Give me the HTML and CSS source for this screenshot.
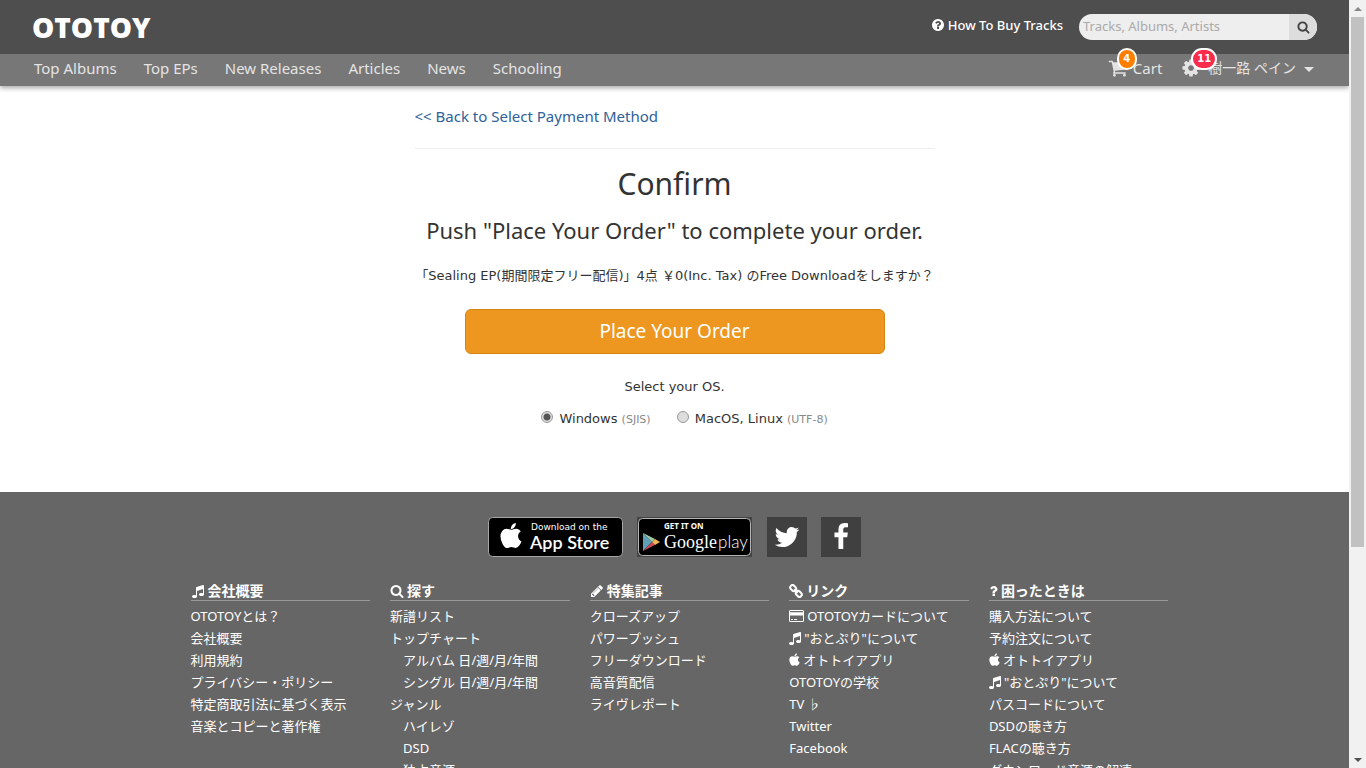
FILE: index.html
```html
<!DOCTYPE html>
<html lang="ja">
<head>
<meta charset="utf-8">
<title>Confirm - OTOTOY</title>
<link rel="stylesheet" href="styles.css">
</head>
<body>
<svg class="sprite" aria-hidden="true">
  <symbol id="i-search" viewBox="0 0 1792 1792"><path d="M1216 832q0-185-131.500-316.500t-316.500-131.500-316.500 131.500-131.500 316.500 131.500 316.500 316.500 131.500 316.500-131.500 131.500-316.500zm512 832q0 52-38 90t-90 38q-54 0-90-38l-343-342q-179 124-399 124-143 0-273.500-55.500t-225-150-150-225-55.500-273.500 55.500-273.500 150-225 225-150 273.500-55.500 273.500 55.500 225 150 150 225 55.500 273.500q0 220-124 399l343 343q37 37 37 90z"/></symbol>
  <symbol id="i-music" viewBox="128 0 1536 1792"><path d="M1664 224v1120q0 50-34 89t-86 60.500-103.500 32-96.500 10.500-96.500-10.500-103.500-32-86-60.500-34-89 34-89 86-60.500 103.500-32 96.500-10.500q105 0 192 39v-537l-768 237v709q0 50-34 89t-86 60.500-103.500 32-96.500 10.500-96.500-10.500-103.500-32-86-60.500-34-89 34-89 86-60.500 103.500-32 96.500-10.500q105 0 192 39v-967q0-31 19-56.500t49-35.500l832-256q12-4 28-4 40 0 68 28t28 68z"/></symbol>
  <symbol id="i-pencil" viewBox="128 0 1536 1792"><path d="M491 1536l91-91-235-235-91 91v107h128v128h107zm523-928q0-22-22-22-10 0-17 7l-542 542q-7 7-7 17 0 22 22 22 10 0 17-7l542-542q7-7 7-17zm-54-192l416 416-832 832h-416v-416zm683 96q0 53-37 90l-166 166-416-416 166-165q36-38 90-38 53 0 91 38l235 234q37 39 37 91z"/></symbol>
  <symbol id="i-cart" viewBox="0 0 1792 1792"><path d="M704 1536q0 52-38 90t-90 38-90-38-38-90 38-90 90-38 90 38 38 90zm896 0q0 52-38 90t-90 38-90-38-38-90 38-90 90-38 90 38 38 90zm128-1088v512q0 24-16.500 42.500t-40.500 21.500l-1044 122q13 60 13 70 0 16-24 64h920q26 0 45 19t19 45-19 45-45 19h-1024q-26 0-45-19t-19-45q0-11 8-31.500t16-36 21.500-40 15.500-29.500l-177-823h-204q-26 0-45-19t-19-45 19-45 45-19h256q16 0 28.500 6.500t19.500 15.500 13 24.500 8 26 5.500 29.500 4.500 26h1201q26 0 45 19t19 45z"/></symbol>
  <symbol id="i-cog" viewBox="0 0 1792 1792"><path d="M1152 896q0-106-75-181t-181-75-181 75-75 181 75 181 181 75 181-75 75-181zm512-109v222q0 12-8 23t-20 13l-185 28q-19 54-39 91 35 50 107 138 10 12 10 25t-9 23q-27 37-99 108t-94 71q-12 0-26-9l-138-108q-44 23-91 38-16 136-29 186-7 28-36 28h-222q-14 0-24.500-8.500t-11.500-21.500l-28-184q-49-16-90-37l-141 107q-10 9-25 9-14 0-25-11-126-114-165-168-7-10-7-23 0-12 8-23 15-21 51-66.500t54-70.500q-27-50-41-99l-183-27q-13-2-21-12.500t-8-23.500v-222q0-12 8-23t19-13l186-28q14-46 39-92-40-57-107-138-10-12-10-24 0-10 9-23 26-36 98.500-107.500t94.500-71.500q13 0 26 10l138 107q44-23 91-38 16-136 29-186 7-28 36-28h222q14 0 24.500 8.500t11.500 21.500l28 184q49 16 90 37l142-107q9-9 24-9 13 0 25 10 129 119 165 170 7 8 7 22 0 12-8 23-15 21-51 66.500t-54 70.500q26 50 41 98l183 28q13 2 21 12.500t8 23.500z"/></symbol>
  <symbol id="i-help" viewBox="0 0 1792 1792"><path d="M1024 1376v-192q0-14-9-23t-23-9h-192q-14 0-23 9t-9 23v192q0 14 9 23t23 9h192q14 0 23-9t9-23zm256-672q0-88-55.500-163t-138.500-116-170-41q-243 0-371 213-15 24 8 42l132 100q7 6 19 6 16 0 25-12 53-68 86-92 34-24 86-24 48 0 85.500 26t37.500 59q0 38-20 61t-68 45q-63 28-115.500 86.500t-52.500 125.500v36q0 14 9 23t23 9h192q14 0 23-9t9-23q0-19 21.500-49.500t54.500-49.500q32-18 49-28.500t46-35 44.500-48 28-60.500 12.500-81zm384 192q0 209-103 385.500t-279.500 279.500-385.500 103-385.500-103-279.500-279.500-103-385.500 103-385.500 279.500-279.500 385.500-103 385.500 103 279.500 279.500 103 385.500z"/></symbol>
  <symbol id="i-question" viewBox="384 0 1024 1792"><path d="M1088 1256v240q0 16-12 28t-28 12h-240q-16 0-28-12t-12-28v-240q0-16 12-28t28-12h240q16 0 28 12t12 28zm316-600q0 54-15.500 101t-35 76.500-55 59.500-57.500 43.500-61 35.500q-41 23-68.500 65t-27.500 67q0 17-12 32.500t-28 15.500h-240q-15 0-25.500-18.500t-10.500-37.500v-45q0-83 65-156.500t143-108.500q59-27 84-56t25-76q0-42-46.500-74t-107.500-32q-65 0-108 29-35 25-107 115-13 16-31 16-12 0-25-8l-164-125q-13-10-15.500-25t5.500-28q160-266 464-266 80 0 161 31t146 83 106 127.500 41 158.500z"/></symbol>
  <symbol id="i-link" viewBox="0 0 14 14"><g fill="none" stroke="currentColor" stroke-width="2"><rect x="1" y="1.800" width="6.400" height="4.600" rx="2.200" transform="rotate(45 4.200 4.100)"/><rect x="6.600" y="7.600" width="6.400" height="4.600" rx="2.200" transform="rotate(45 9.800 9.900)"/><path d="M5.200 5.200l3.600 3.600"/></g></symbol>
  <symbol id="i-card" viewBox="0 0 15 14"><path fill-rule="evenodd" d="M1.500 1h12A1.500 1.500 0 0 1 15 2.500v9a1.500 1.500 0 0 1-1.500 1.500h-12A1.500 1.500 0 0 1 0 11.500v-9A1.500 1.500 0 0 1 1.500 1zM1 3.200h13v-.7a.5.500 0 0 0-.5-.5h-12a.5.500 0 0 0-.5.500zM1 6.500v5a.5.500 0 0 0 .5.500h12a.5.500 0 0 0 .5-.5v-5zM2 10h2v1H2zm3 0h3v1H5z"/></symbol>
  <symbol id="i-apple" viewBox="150 0 1480 1792"><path d="M1585 1215q-39 125-123 250-129 196-257 196-49 0-140-32-86-32-151-32-61 0-142 33-81 34-132 34-152 0-301-259-147-261-147-503 0-228 113-374 113-144 284-144 72 0 177 30 104 30 138 30 45 0 143-34 102-34 173-34 119 0 213 65 52 36 104 100-79 67-114 118-65 94-65 207 0 124 69 223t158 126zm-376-1173q0 61-29 136-30 75-93 138-54 54-108 72-37 11-104 17 3-149 78-257 74-107 250-148 1 3 2.500 11t2.500 11q0 4 .5 10t.5 10z"/></symbol>
  <symbol id="i-twitter" viewBox="0 0 1792 1792"><path d="M1684 408q-67 98-162 167 1 14 1 42 0 130-38 259.500t-115.500 248.500-184.500 210.500-258 146-323 54.500q-271 0-496-145 35 4 78 4 225 0 401-138-105-2-188-64.500t-114-159.500q33 5 61 5 43 0 85-11-112-23-185.500-111.500t-73.500-205.500v-4q68 38 146 41-66-44-105-115t-39-154q0-88 44-163 121 149 294.500 238.500t371.500 99.500q-8-38-8-74 0-134 94.500-228.500t228.500-94.500q140 0 236 102 109-21 205-78-37 115-142 178 93-10 186-50z"/></symbol>
  <symbol id="i-facebook" viewBox="0 0 1792 1792"><path d="M1343 12v264h-157q-86 0-116 36t-30 108v189h293l-39 296h-254v759h-306v-759h-255v-296h255v-218q0-186 104-288.500t277-102.500q147 0 228 12z"/></symbol>
</svg>

<div class="window">
  <div class="page">
    <header class="header">
      <div class="topbar">
        <a class="logo" href="#">OTOTOY</a>
        <div class="tools">
          <a class="howto" href="#"><svg class="icon"><use href="#i-help"/></svg>How To Buy Tracks</a>
          <form class="search">
            <input type="text" placeholder="Tracks, Albums, Artists" aria-label="Search">
            <button type="button" aria-label="Search"><svg class="icon"><use href="#i-search"/></svg></button>
          </form>
        </div>
      </div>
      <nav class="navbar">
        <div class="menu">
          <a href="#">Top Albums</a><a href="#">Top EPs</a><a href="#">New Releases</a><a href="#">Articles</a><a href="#">News</a><a href="#">Schooling</a>
        </div>
        <div class="account">
          <a class="account-link" href="#"><svg class="big-icon"><use href="#i-cart"/></svg><span class="badge">4</span><span class="label">Cart</span></a>
          <a class="account-link" href="#"><svg class="big-icon"><use href="#i-cog"/></svg><span class="badge alert">11</span><span class="label name">樹一路 ペイン</span><span class="caret"></span></a>
        </div>
      </nav>
    </header>

    <main class="main">
      <a class="back" href="#">&lt;&lt; Back to Select Payment Method</a>
      <hr>
      <h1>Confirm</h1>
      <h2>Push "Place Your Order" to complete your order.</h2>
      <p class="order">「Sealing EP(期間限定フリー配信)」4点 ￥0(Inc. Tax) のFree Downloadをしますか？</p>
      <button class="place" type="button">Place Your Order</button>
      <p class="select-os">Select your OS.</p>
      <div class="os">
        <label><input type="radio" name="os" checked> Windows <small>(SJIS)</small></label>
        <label><input type="radio" name="os"> MacOS, Linux <small>(UTF-8)</small></label>
      </div>
    </main>

    <footer class="footer">
      <div class="apps">
        <a href="#" class="store">
          <svg width="135" height="40" viewBox="0 0 135 40" role="img">
            <rect x=".5" y=".5" width="134" height="39" rx="4" fill="#000" stroke="#a6a6a6"/>
            <svg x="11" y="6" width="24" height="27" fill="#fff"><use href="#i-apple"/></svg>
            <text x="43" y="13" class="t-small">Download on the</text>
            <text x="42" y="32" class="t-apple">App Store</text>
          </svg>
        </a>
        <a href="#" class="store play">
          <svg width="115" height="40" viewBox="0 0 115 40" role="img">
            <rect width="115" height="40" fill="#444"/>
            <rect x="1.500" y="1.500" width="112" height="37" rx="4" fill="#000" stroke="#b5b5b5"/>
            <path d="M6 16v18l9-9z" fill="#5f9fb8"/><path d="M6 16l12 6-3 3z" fill="#9bc9a4"/><path d="M6 34l12-6-3-3z" fill="#c94955"/><path d="M18 22l5 3-5 3-3-3z" fill="#f0b45c"/>
            <text x="27" y="12" class="t-get">GET IT ON</text>
            <text x="27" y="31" class="t-google">Google</text>
            <text x="81" y="31" class="t-play">play</text>
          </svg>
        </a>
        <a href="#" class="social" aria-label="Twitter"><svg><use href="#i-twitter"/></svg></a>
        <a href="#" class="social" aria-label="Facebook"><svg><use href="#i-facebook"/></svg></a>
      </div>
      <div class="columns">
        <section>
          <h3><svg class="icon"><use href="#i-music"/></svg>会社概要</h3>
          <ul>
            <li><a href="#">OTOTOYとは？</a></li><li><a href="#">会社概要</a></li><li><a href="#">利用規約</a></li><li><a href="#">プライバシー・ポリシー</a></li><li><a href="#">特定商取引法に基づく表示</a></li><li><a href="#">音楽とコピーと著作権</a></li>
          </ul>
        </section>
        <section>
          <h3><svg class="icon"><use href="#i-search"/></svg>探す</h3>
          <ul>
            <li><a href="#">新譜リスト</a></li><li><a href="#">トップチャート</a></li>
            <li class="sub"><a href="#">アルバム</a> <a href="#">日</a>/<a href="#">週</a>/<a href="#">月</a>/<a href="#">年間</a></li>
            <li class="sub"><a href="#">シングル</a> <a href="#">日</a>/<a href="#">週</a>/<a href="#">月</a>/<a href="#">年間</a></li>
            <li><a href="#">ジャンル</a></li><li class="sub"><a href="#">ハイレゾ</a></li><li class="sub"><a href="#">DSD</a></li><li class="sub"><a href="#">独占音源</a></li>
          </ul>
        </section>
        <section>
          <h3><svg class="icon"><use href="#i-pencil"/></svg>特集記事</h3>
          <ul>
            <li><a href="#">クローズアップ</a></li><li><a href="#">パワープッシュ</a></li><li><a href="#">フリーダウンロード</a></li><li><a href="#">高音質配信</a></li><li><a href="#">ライヴレポート</a></li>
          </ul>
        </section>
        <section>
          <h3><svg class="icon"><use href="#i-link"/></svg>リンク</h3>
          <ul>
            <li><a href="#"><svg class="icon wide"><use href="#i-card"/></svg>OTOTOYカードについて</a></li>
            <li><a href="#"><svg class="icon note"><use href="#i-music"/></svg>"おとぷり"について</a></li>
            <li><a href="#"><svg class="icon slim"><use href="#i-apple"/></svg>オトトイアプリ</a></li>
            <li><a href="#">OTOTOYの学校</a></li><li><a href="#">TV ♭</a></li><li><a href="#">Twitter</a></li><li><a href="#">Facebook</a></li>
          </ul>
        </section>
        <section>
          <h3><svg class="icon narrow"><use href="#i-question"/></svg>困ったときは</h3>
          <ul>
            <li><a href="#">購入方法について</a></li><li><a href="#">予約注文について</a></li>
            <li><a href="#"><svg class="icon slim"><use href="#i-apple"/></svg>オトトイアプリ</a></li>
            <li><a href="#"><svg class="icon note"><use href="#i-music"/></svg>"おとぷり"について</a></li>
            <li><a href="#">パスコードについて</a></li><li><a href="#">DSDの聴き方</a></li><li><a href="#">FLACの聴き方</a></li><li><a href="#">ダウンロード音源の解凍</a></li>
          </ul>
        </section>
      </div>
    </footer>
  </div>
  <div class="scrollbar" aria-hidden="true"><span class="arrow up"></span><span class="thumb"></span><span class="arrow down"></span></div>
</div>
</body>
</html>
```

FILE: styles.css
```css
* { box-sizing: border-box; }
body {
  margin: 0;
  font-family: "Noto Sans", "Noto Sans CJK JP", sans-serif;
  font-size: 13px;
  line-height: 20px;
  color: #333;
  background: #fff;
}
a { color: inherit; text-decoration: none; }
input, button { font: inherit; }
.sprite { position: absolute; width: 0; height: 0; }
.window { display: flex; height: 100vh; overflow: hidden; }
.page { flex: 1; min-width: 0; display: flex; flex-direction: column; }
.icon { width: 14px; height: 14px; fill: currentColor; vertical-align: -2px; margin-right: 3px; }

.header { box-shadow: 0 2px 5px rgba(0, 0, 0, .35); }
.topbar {
  display: flex; align-items: center; justify-content: space-between;
  height: 54px; padding: 0 32px; background: #4e4e4e; color: #fff;
}
.logo { font-family: "Open Sans", sans-serif; font-size: 28px; font-weight: 800; line-height: 54px; }
.tools { display: flex; align-items: center; gap: 16px; }
.howto { padding-bottom: 4px; font-weight: 500; }
.search { display: flex; width: 238px; height: 26px; border-radius: 13px; overflow: hidden; background: #eee; }
.search input { flex: 1; min-width: 0; border: 0; padding: 0 4px 2px; background: transparent; font-size: 13px; outline: 0; }
.search input::placeholder { color: #aaa; opacity: 1; }
.search button { width: 28px; border: 0; padding: 0; background: #ddd; color: #444; }
.search .icon { width: 13px; margin: 0; }

.navbar {
  display: flex; justify-content: space-between; align-items: center;
  height: 32px; padding: 0 34px 4px; background: #777; color: #e4e4e4;
  font-size: 15px;
}
.menu { display: flex; gap: 27px; }
.account { display: flex; gap: 19px; padding-right: 1px; }
.account-link { position: relative; display: flex; align-items: center; }
.big-icon { width: 20px; height: 20px; fill: currentColor; }
.label { margin-left: 5px; }
.label.name { margin-left: 7px; font-size: 14px; }
.badge {
  position: absolute; left: 9px; top: -10px; min-width: 20px; height: 22px; padding: 0 4px;
  border: 2px solid #fff; border-radius: 11px; background: #ff7e00; color: #fff;
  font-family: "DejaVu Sans", sans-serif; font-size: 10px; font-weight: bold; line-height: 18px; text-align: center;
}
.badge.alert { left: 10px; background: #fb2c4b; }
.caret { margin: 2px 0 0 8px; border: 5px solid transparent; border-top-color: currentColor; border-bottom: 0; }

.main { width: 100%; max-width: 520px; margin: 0 auto; padding: 19px 0 62px; text-align: center; }
.back { display: block; text-align: left; font-size: 15px; line-height: 22px; color: #2e6299; }
.main hr { margin: 21px 0 0; border: 0; border-top: 1px solid #eee; }
.main h1 { margin: 15px 0 0; font-size: 30px; font-weight: 400; line-height: 40px; }
.main h2 { margin: 12px 0 0; font-size: 22px; font-weight: 400; line-height: 28px; white-space: nowrap; }
.order, .select-os, .os { font-family: "DejaVu Sans", "Noto Sans CJK JP", sans-serif; }
.order { margin: 22px 0 0; line-height: 20px; white-space: nowrap; }
.place {
  width: 420px; height: 45px; margin-top: 23px; padding: 0 0 2px;
  border: 1px solid #d58512; border-radius: 6px; background: #ed9720; color: #fff; font-size: 19px;
}
.select-os { margin: 23px 0 0; }
.os { display: flex; justify-content: center; gap: 26px; margin-top: 12px; padding-left: 20px; }
.os input {
  appearance: none; width: 12px; height: 12px; margin: 0 2px 0 0; vertical-align: 0;
  border: 1px solid #999; border-radius: 50%; background: #ddd;
}
.os input:checked { background: radial-gradient(circle, #555 0 3px, #ddd 4px); }
.os small { font-size: 11px; color: #888; }

.footer { flex: 1 0 auto; padding-top: 25px; background: #666; color: #fff; }
.apps { display: flex; justify-content: center; }
.apps a { display: block; height: 40px; }
.store { margin-right: 14px; }
.store.play { margin-right: 15px; }
.store text { fill: #fff; }
.t-small { font: 9px "DejaVu Sans", sans-serif; }
.t-apple { font: 600 18px Lato, sans-serif; }
.t-get { font: 700 8px "Noto Sans", sans-serif; }
.t-google { font: 18px "Liberation Serif", serif; }
.t-play { font: 300 17px Lato, sans-serif; }
.social { width: 40px; padding: 6px; background: #404040; }
.social + .social { margin-left: 14px; }
.social svg { width: 28px; height: 28px; fill: #fff; }
.columns { display: flex; max-width: 998px; margin: 24px auto 0; }
.columns section { flex: 1 1 0; min-width: 0; padding: 0 5px 0 15px; }
.columns h3 { margin: 0; border-bottom: 1px solid #999; font-size: 14px; line-height: 19px; }
.columns ul { margin: 4px 0 0; padding: 0; list-style: none; }
.columns li { height: 22px; line-height: 22px; white-space: nowrap; }
.columns .sub { padding-left: 13px; }
.columns .slim { width: 11px; }
.columns .note { width: 12px; }
.columns .wide { width: 15px; }
.columns .narrow { width: 9px; }

.scrollbar { display: flex; flex-direction: column; align-items: center; width: 17px; background: #f1f1f1; }
.thumb { width: 13px; flex: 0 0 69%; margin-top: 6px; background: #c1c1c1; }
.arrow { border: 4px solid transparent; }
.arrow.up { margin-top: 7px; border-top: 0; border-bottom-color: #888; }
.arrow.down { margin-top: auto; margin-bottom: 6px; border-top-color: #505050; border-bottom: 0; }
```
